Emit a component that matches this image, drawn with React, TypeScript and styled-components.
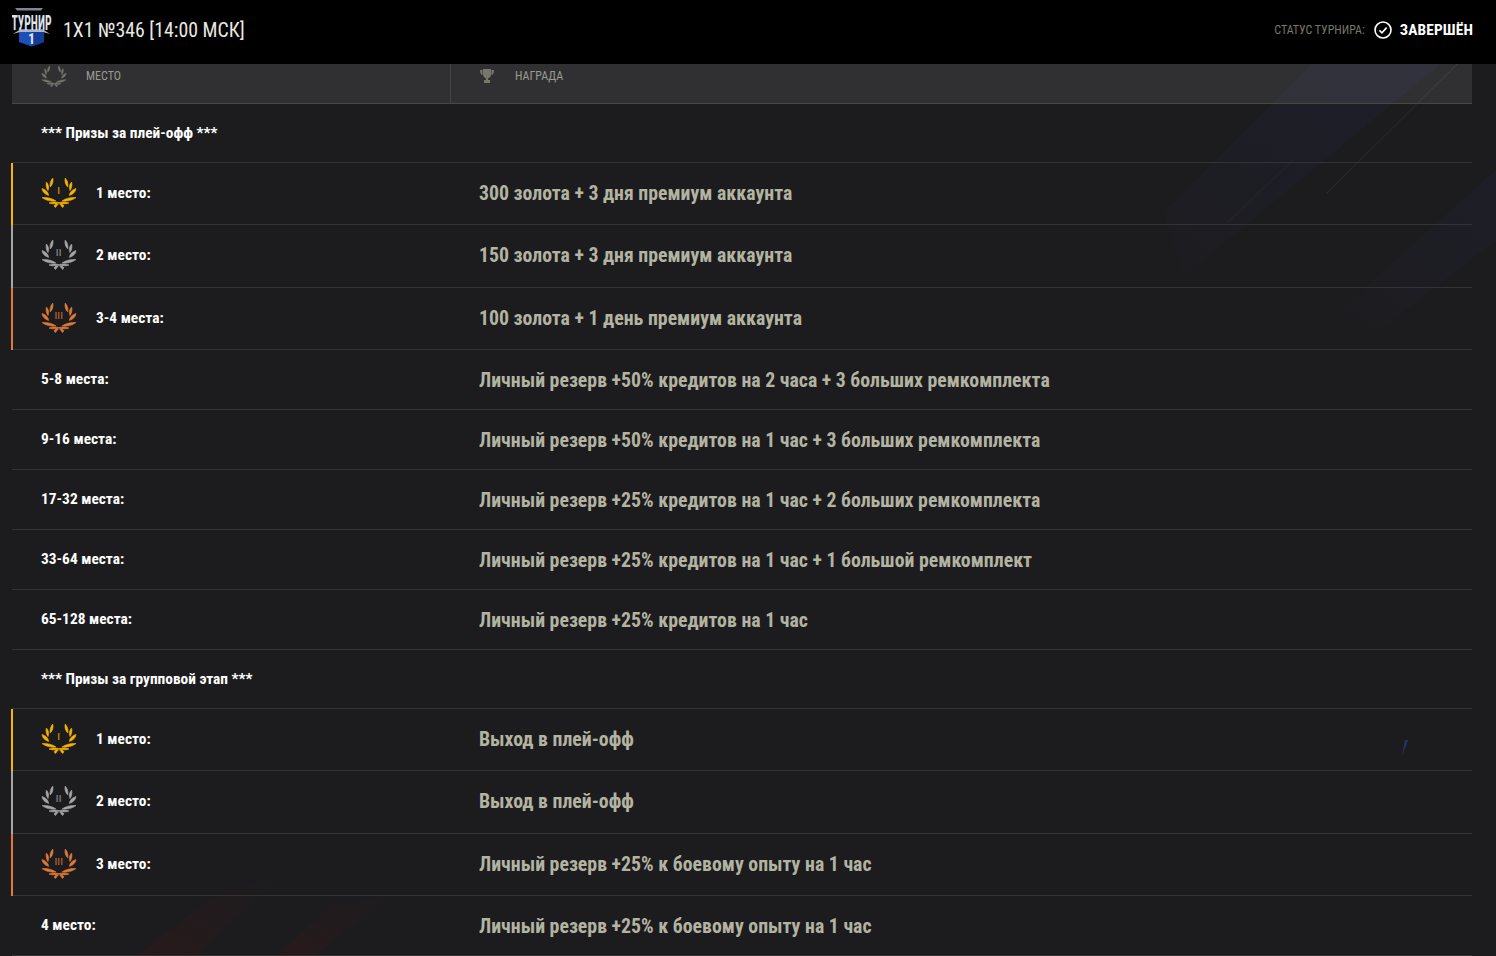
import React from "react";
import styled, { createGlobalStyle } from "styled-components";

const FONT = `"Roboto Condensed", Roboto, "Liberation Sans", sans-serif`;

const Global = createGlobalStyle`
  html, body { margin: 0; padding: 0; background: #1c1c1e; }
  body { font-family: ${FONT}; font-stretch: 75%; overflow: hidden; }
`;

const Page = styled.div`
  position: relative;
  width: 1496px;
  height: 956px;
  overflow: hidden;
  background: #1c1c1e;
`;
const Art = styled.svg`
  position: absolute;
  left: 0;
  top: 0;
  pointer-events: none;
`;
const Header = styled.header`
  position: relative;
  z-index: 1;
  height: 64px;
  box-sizing: border-box;
  padding: 0 23px 4px 12px;
  background: #000;
  display: flex;
  align-items: center;
`;
const Title = styled.h1`
  margin: 0 0 0 11px;
  font-size: 19.8px;
  font-weight: 400;
  color: #e9e9e2;
`;
const Status = styled.div`
  margin-left: auto;
  display: flex;
  align-items: center;
`;
const StatusLabel = styled.span`
  font-size: 12px;
  color: #77776b;
`;
const StatusValue = styled.span`
  margin-left: 8px;
  font-size: 15.4px;
  font-weight: 700;
  letter-spacing: 0.12px;
  color: #fff;
`;
const CheckWrap = styled.span`
  margin-left: 9px;
  display: flex;
`;
const Table = styled.main`
  position: relative;
  margin: 0 24px 0 12px;
`;
const HeadRow = styled.div`
  display: grid;
  grid-template-columns: 438px 1fr;
  height: 39px;
  background: rgba(255, 255, 255, 0.09);
  border-bottom: 1px solid #48483f;
`;
const HeadCell = styled.div<{ $pad: number; $gap: number; $line?: boolean }>`
  display: flex;
  align-items: center;
  gap: ${(p) => p.$gap}px;
  padding-left: ${(p) => p.$pad}px;
  padding-bottom: 15px;
  font-size: 12px;
  color: #9a9a90;
  border-left: ${(p) => (p.$line ? "1px solid #444" : "none")};
`;
const SectionRow = styled.div<{ $h: number }>`
  display: flex;
  align-items: center;
  height: ${(p) => p.$h}px;
  box-sizing: border-box;
  padding-left: 29px;
  padding-bottom: 1px;
  font-size: 15.4px;
  font-weight: 700;
  color: #fff;
  border-bottom: 1px solid #333334;
`;
const Row = styled.div<{ $h: number; $accent?: string }>`
  position: relative;
  display: grid;
  grid-template-columns: 438px 1fr;
  align-items: center;
  height: ${(p) => p.$h}px;
  box-sizing: border-box;
  padding-bottom: ${(p) => (p.$h === 63 ? "1px" : "0")};
  border-bottom: 1px solid #333334;
  ${(p) =>
    p.$accent
      ? `&::before {
          content: "";
          position: absolute;
          left: -1px;
          top: 0;
          bottom: -1px;
          width: 2px;
          background: ${p.$accent};
        }`
      : ""}
`;
const Place = styled.div`
  display: flex;
  align-items: center;
  padding-left: 29px;
  padding-bottom: 1px;
  font-size: 15.4px;
  font-weight: 700;
  color: #fff;
  gap: 19px;
`;
const Prize = styled.div<{ $plain: boolean }>`
  padding-left: 29px;
  padding-top: ${(p) => (p.$plain ? "2px" : "0")};
  font-size: 19.8px;
  letter-spacing: 0.012px;
  font-weight: 700;
  color: #b3b3a2;
`;
const LogoBox = styled.span`
  display: flex;
  width: 40px;
  height: 40px;
  margin-bottom: 6px;
`;
const MedalBox = styled.span`
  display: flex;
  width: 36px;
  height: 32px;
`;

const leaves = [
  "M11.8 1 C9.5 3.5 8.6 6.5 9.2 10 C11.5 8 12.6 4.5 11.8 1Z",
  "M5.4 5 C4.6 8 5.2 11 7 13.6 C8.2 11 7.8 7.5 5.4 5Z",
  "M1 11.5 C1.2 14.5 3.5 17.2 7.6 18.4 C7.4 15.6 5 12.6 1 11.5Z",
  "M1 20.6 C4.5 23.4 10 24.6 15 24 C11.5 21.4 6 20 1 20.6Z",
  "M8 26 C11 27.2 15 27.2 18 25.6 C15 24.8 11 24.8 8 26Z",
  "M14.4 30.6 L17.6 26.6 L15.4 26.8 L13 28.8Z",
];

const Wreath = ({ color }: { color: string }) => (
  <g fill={color} stroke={color} strokeWidth="0.6" strokeLinejoin="round">
    {leaves.map((d) => (
      <path key={d} d={d} />
    ))}
    <g transform="translate(36 0) scale(-1 1)">
      {leaves.map((d) => (
        <path key={d} d={d} />
      ))}
    </g>
  </g>
);

const Medal = ({ color, num }: { color: string; num: string }) => (
  <MedalBox>
    <svg width="36" height="32" viewBox="0 0 36 32">
      <Wreath color={color} />
      <text x="18" y="17" textAnchor="middle" fontSize="8.5" fill={color} fontFamily="Roboto, sans-serif" opacity="0.75" letterSpacing="0.6">
        {num}
      </text>
    </svg>
  </MedalBox>
);

const Logo = () => (
  <LogoBox>
    <svg width="40" height="40" viewBox="0 0 40 40">
      <path d="M7 22 H32 V35 L19.5 39.5 L7 35Z" fill="#1c4fb8" />
      <path d="M19.5 22 H32 V35 L19.5 39.5Z" fill="#123d98" />
      <path d="M3 1 H31 L29 3.4 H5Z" fill="#7d8598" />
      <path d="M1 27 L8 22.4 H31 L38 27 L31 25 H8Z" fill="#b0b6c4" />
      <text transform="translate(19.5 22.6) scale(1 1.7)" textAnchor="middle" fontSize="11.6" fontWeight="700" fill="#dfe3ea" fontFamily="Roboto, sans-serif" style={{ fontStretch: "75%" }}>
        ТУРНИР
      </text>
      <text x="19.5" y="37" textAnchor="middle" fontSize="14" fontWeight="700" fill="#dfe8fa" fontFamily="Roboto, sans-serif">
        1
      </text>
    </svg>
  </LogoBox>
);

const GOLD = "#f8b400";
const SILVER = "#a6a6a6";
const BRONZE = "#df7a38";

type Entry = { h: number; label: string; prize: string; accent?: string; num?: string };

const first: Entry[] = [
  { h: 62, label: "1 место:", prize: "300 золота + 3 дня премиум аккаунта", accent: GOLD, num: "I" },
  { h: 63, label: "2 место:", prize: "150 золота + 3 дня премиум аккаунта", accent: SILVER, num: "II" },
  { h: 62, label: "3-4 места:", prize: "100 золота + 1 день премиум аккаунта", accent: BRONZE, num: "III" },
  { h: 60, label: "5-8 места:", prize: "Личный резерв +50% кредитов на 2 часа + 3 больших ремкомплекта" },
  { h: 60, label: "9-16 места:", prize: "Личный резерв +50% кредитов на 1 час + 3 больших ремкомплекта" },
  { h: 60, label: "17-32 места:", prize: "Личный резерв +25% кредитов на 1 час + 2 больших ремкомплекта" },
  { h: 60, label: "33-64 места:", prize: "Личный резерв +25% кредитов на 1 час + 1 большой ремкомплект" },
  { h: 60, label: "65-128 места:", prize: "Личный резерв +25% кредитов на 1 час" },
];
const second: Entry[] = [
  { h: 62, label: "1 место:", prize: "Выход в плей-офф", accent: GOLD, num: "I" },
  { h: 63, label: "2 место:", prize: "Выход в плей-офф", accent: SILVER, num: "II" },
  { h: 62, label: "3 место:", prize: "Личный резерв +25% к боевому опыту на 1 час", accent: BRONZE, num: "III" },
  { h: 60, label: "4 место:", prize: "Личный резерв +25% к боевому опыту на 1 час" },
];

const Rows = ({ items }: { items: Entry[] }) => (
  <>
    {items.map((e, i) => (
      <Row key={i} $h={e.h} $accent={e.accent}>
        <Place>
          {e.accent && <Medal color={e.accent} num={e.num!} />}
          {e.label}
        </Place>
        <Prize $plain={!e.accent}>{e.prize}</Prize>
      </Row>
    ))}
  </>
);

export default function App() {
  return (
    <Page>
      <Global />
      <Art width="1496" height="956" viewBox="0 0 1496 956">
        <defs>
          <linearGradient id="blue" x1="1" y1="0" x2="0" y2="1">
            <stop offset="0" stopColor="#23234a" stopOpacity=".55" />
            <stop offset="1" stopColor="#23234a" stopOpacity=".08" />
          </linearGradient>
          <linearGradient id="red" x1="0" y1="1" x2="1" y2="0">
            <stop offset="0" stopColor="#3a1618" stopOpacity=".4" />
            <stop offset="1" stopColor="#3a1618" stopOpacity="0" />
          </linearGradient>
        </defs>
        <polygon points="1313,64 1440,64 1183,277 1163,213" fill="url(#blue)" opacity=".55" />
        <polygon points="1496,170 1496,240 1380,330 1340,310" fill="url(#blue)" opacity=".4" />
        <polygon points="1405,740 1408,740 1402,756" fill="#2a3a80" opacity=".8" />
        <polygon points="137,956 213,897 277,877 197,956" fill="url(#red)" />
        <polygon points="277,956 333,903 390,897 313,956" fill="url(#red)" />
        <line x1="1227" y1="223" x2="1293" y2="160" stroke="#26262b" />
        <line x1="1327" y1="193" x2="1457" y2="64" stroke="#2c2c31" />
      </Art>
      <Header>
        <Logo />
        <Title>1Х1 №346 [14:00 МСК]</Title>
        <Status>
          <StatusLabel>СТАТУС ТУРНИРА:</StatusLabel>
          <CheckWrap>
            <svg width="18" height="18" viewBox="0 0 18 18" fill="none" stroke="#fff" strokeWidth="1.6">
              <circle cx="9" cy="9" r="8" />
              <path d="M5.4 9.3 L8 11.8 L12.6 6.6" />
            </svg>
          </CheckWrap>
          <StatusValue>ЗАВЕРШЁН</StatusValue>
        </Status>
      </Header>
      <Table>
        <HeadRow>
          <HeadCell $pad={29} $gap={19}>
            <svg width="26" height="23" viewBox="0 0 36 32">
              <Wreath color="#77776b" />
            </svg>
            МЕСТО
          </HeadCell>
          <HeadCell $pad={28} $gap={20} $line>
            <svg width="16" height="16" viewBox="0 0 16 16" fill="#77776b">
              <path d="M4 1 H12 V6 C12 9 10 10 9 10.5 V12 H11 V15 H5 V12 H7 V10.5 C6 10 4 9 4 6Z" />
              <path d="M1 2 H3.5 V7 C2 7 1 5 1 2Z M15 2 H12.5 V7 C14 7 15 5 15 2Z" />
            </svg>
            НАГРАДА
          </HeadCell>
        </HeadRow>
        <SectionRow $h={59}>*** Призы за плей-офф ***</SectionRow>
        <Rows items={first} />
        <SectionRow $h={59}>*** Призы за групповой этап ***</SectionRow>
        <Rows items={second} />
      </Table>
    </Page>
  );
}
